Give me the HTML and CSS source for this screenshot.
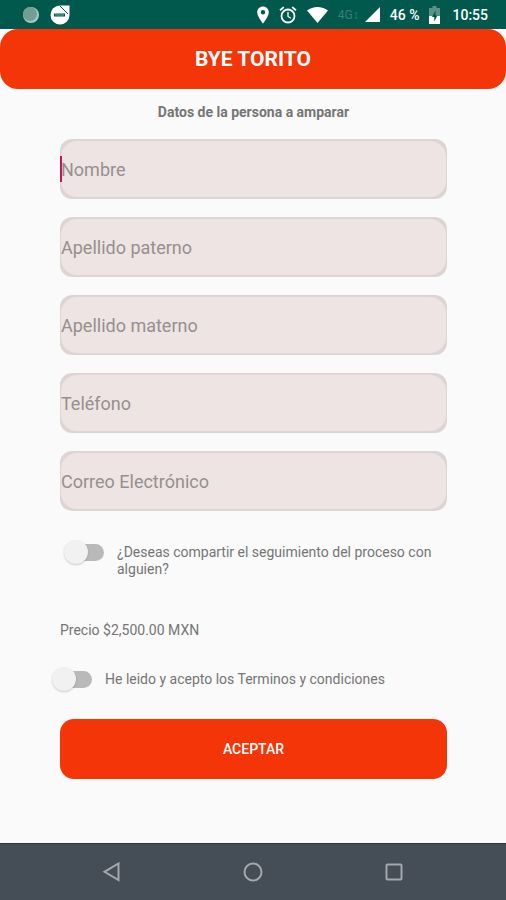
FILE: index.html
```html
<!DOCTYPE html>
<html lang="es">
<head>
    <meta charset="UTF-8">
    <meta name="viewport" content="width=device-width, initial-scale=1.0">
    <title>Bye Torito</title>
    <link rel="stylesheet" href="styles.css">
</head>
<body>

    <!-- Status bar -->
    <div class="status-bar">
        <div class="status-left">
            <svg width="18" height="18" viewBox="0 0 18 18">
                <circle cx="9" cy="9" r="8" fill="#a9c8c1"/>
                <circle cx="8" cy="8" r="7" fill="#6f9f95"/>
            </svg>
            <svg width="20" height="20" viewBox="0 0 20 20">
                <path d="M10 0.500H19.500V10A9.500 9.500 0 1 1 10 0.500Z" fill="#fff"/>
                <path d="M10 1L18 9" stroke="#00594c" stroke-width="1"/>
                <path d="M4 10H15" stroke="#00594c" stroke-width="3"/>
                <path d="M5 10H14" stroke="#7fa8a0" stroke-width="1"/>
            </svg>
        </div>
        <div class="status-right">
            <svg width="12" height="18" viewBox="0 0 12 18">
                <path d="M6 0.500C2.700 0.500 0.200 3 0.200 6.200C0.200 10.500 6 17.500 6 17.500S11.800 10.500 11.800 6.200C11.800 3 9.300 0.500 6 0.500ZM6 8.400A2.200 2.200 0 1 1 6 4A2.200 2.200 0 0 1 6 8.400Z" fill="#fff"/>
            </svg>
            <svg width="18" height="18" viewBox="0 0 18 18" fill="none" stroke="#fff">
                <circle cx="9" cy="10" r="6.500" stroke-width="1.800"/>
                <path d="M9 6V10.500L12 12.300" stroke-width="1.300"/>
                <path d="M1 4.300L4.800 1.100M17 4.300L13.200 1.100" stroke-width="1.800"/>
            </svg>
            <svg width="21" height="18" viewBox="0 0 21 18">
                <path d="M0 4.500C6 -0.200 15 -0.200 21 4.500L10.500 17Z" fill="#fff"/>
            </svg>
            <span class="network">4G↕</span>
            <svg width="15" height="15" viewBox="0 0 15 15">
                <path d="M15 0V15H0Z" fill="#fff"/>
            </svg>
            <span class="battery-level">46 %</span>
            <svg width="11" height="18" viewBox="0 0 11 18">
                <path d="M3.500 0H7.500V2H11V18H0V2H3.500Z" fill="#5b9187"/>
                <path d="M0 10H11V18H0Z" fill="#fff"/>
                <path d="M6.500 4.500L3 11H5.300V15.500L8.500 9.500H6.500Z" fill="#00594c"/>
            </svg>
            <span class="clock">10:55</span>
        </div>
    </div>

    <header class="title-bar">
        <h1>BYE TORITO</h1>
    </header>

    <!-- Form -->
    <main class="content">
        <h2>Datos de la persona a amparar</h2>

        <form class="form">
            <div class="field field-active">
                <input type="text" placeholder="Nombre" aria-label="Nombre">
            </div>
            <div class="field">
                <input type="text" placeholder="Apellido paterno" aria-label="Apellido paterno">
            </div>
            <div class="field">
                <input type="text" placeholder="Apellido materno" aria-label="Apellido materno">
            </div>
            <div class="field">
                <input type="tel" placeholder="Teléfono" aria-label="Teléfono">
            </div>
            <div class="field">
                <input type="email" placeholder="Correo Electrónico" aria-label="Correo Electrónico">
            </div>

            <div class="switch-row share-row">
                <input type="checkbox" class="switch" id="share">
                <label for="share">¿Deseas compartir el seguimiento del proceso con alguien?</label>
            </div>

            <p class="price">Precio $2,500.00 MXN</p>

            <div class="switch-row terms-row">
                <input type="checkbox" class="switch" id="terms">
                <label for="terms">He leido y acepto los Terminos y condiciones</label>
            </div>

            <button type="button" class="accept-button">ACEPTAR</button>
        </form>
    </main>

    <!-- Navigation bar -->
    <nav class="nav-bar">
        <button type="button" aria-label="Atrás">
            <svg width="20" height="20" viewBox="0 0 20 20"><path d="M16.500 1.500V18L2.500 9.800Z"/></svg>
        </button>
        <button type="button" aria-label="Inicio">
            <svg width="20" height="20" viewBox="0 0 20 20"><circle cx="10" cy="10" r="8.500"/></svg>
        </button>
        <button type="button" aria-label="Recientes">
            <svg width="20" height="20" viewBox="0 0 20 20"><rect x="2.500" y="2.500" width="15" height="15" rx="1"/></svg>
        </button>
    </nav>

</body>
</html>
```

FILE: styles.css
```css
/* Basic reset */
* {
    margin: 0;
    padding: 0;
    box-sizing: border-box;
}

body {
    font-family: Roboto, 'Liberation Sans', sans-serif;
    background-color: #fafafa;
    color: #757575;
    font-size: 14px;
    min-height: 100vh;
    display: flex;
    flex-direction: column;
}

/* Status bar */
.status-bar {
    display: flex;
    justify-content: space-between;
    align-items: center;
    height: 29px;
    padding: 0 18px 0 22px;
    background-color: #00594c;
    color: #fff;
}

.status-left,
.status-right {
    display: flex;
    align-items: center;
    gap: 10px;
}

.network {
    font-size: 12px;
    line-height: 24px;
    margin-right: -4px;
    color: #3f7f74;
    align-self: flex-start;
}

.battery-level,
.clock {
    font-size: 14px;
    font-weight: 500;
}

.clock {
    margin-left: 2px;
}

/* Title */
.title-bar {
    display: flex;
    justify-content: center;
    align-items: center;
    height: 60px;
    border-radius: 18px;
    background-color: #f33507;
    color: #fff;
}

h1 {
    font-size: 21px;
    font-weight: bold;
}

/* Form */
.content {
    flex: 1;
    padding: 14px 59px 64px 60px;
}

h2 {
    font-size: 14px;
    line-height: 18px;
    font-weight: bold;
    text-align: center;
    margin-bottom: 18px;
}

.form {
    display: flex;
    flex-direction: column;
    gap: 18px;
}

/* The inner radius is larger, so the edge gets thicker at the corners */
.field {
    position: relative;
    display: flex;
    padding: 2px 1px;
    border-radius: 12px;
    background-color: #dcd5d3;
}

.field input {
    width: 100%;
    height: 56px;
    border: none;
    border-radius: 16px;
    background-color: #ede4e3;
    font-family: inherit;
    font-size: 18px;
    color: #444;
    outline: none;
}

.field input::placeholder {
    color: #978f8f;
    opacity: 1;
}

/* Cursor of the active field */
.field-active::before {
    content: "";
    position: absolute;
    left: 0;
    top: 17px;
    width: 2px;
    height: 26px;
    background-color: #c2185b;
}

/* Switches */
.switch-row {
    display: flex;
    align-items: flex-start;
    gap: 13px;
    line-height: 17px;
}

.switch-row label {
    padding-top: 4px;
}

.share-row {
    padding: 11px 0 0 4px;
}

.terms-row {
    margin: 10px 0 8px -8px;
}

.switch {
    appearance: none;
    position: relative;
    flex: none;
    width: 40px;
    height: 26px;
    cursor: pointer;
}

.switch::before {
    content: "";
    position: absolute;
    left: 8px;
    top: 4px;
    width: 32px;
    height: 17px;
    border-radius: 9px;
    background-color: #b9b9b9;
}

.switch::after {
    content: "";
    position: absolute;
    left: 0;
    top: 0;
    width: 24px;
    height: 24px;
    border-radius: 50%;
    background-color: #f1f1f1;
    box-shadow: 0 1px 2px rgba(0, 0, 0, 0.2);
}

.switch:checked::after {
    left: 16px;
}

.price {
    line-height: 18px;
    margin-top: 25px;
}

.accept-button {
    height: 60px;
    border: none;
    border-radius: 14px;
    background-color: #f33507;
    color: #fff;
    font-family: inherit;
    font-size: 14px;
    font-weight: 500;
    cursor: pointer;
}

/* Navigation bar */
.nav-bar {
    display: flex;
    justify-content: space-between;
    align-items: center;
    height: 57px;
    padding: 0 102px;
    border-top: 1px solid #30363d;
    background-color: #454d56;
}

.nav-bar button {
    display: flex;
    border: none;
    background: none;
    cursor: pointer;
}

.nav-bar svg {
    fill: none;
    stroke: #a3a8ad;
    stroke-width: 2;
}
```
